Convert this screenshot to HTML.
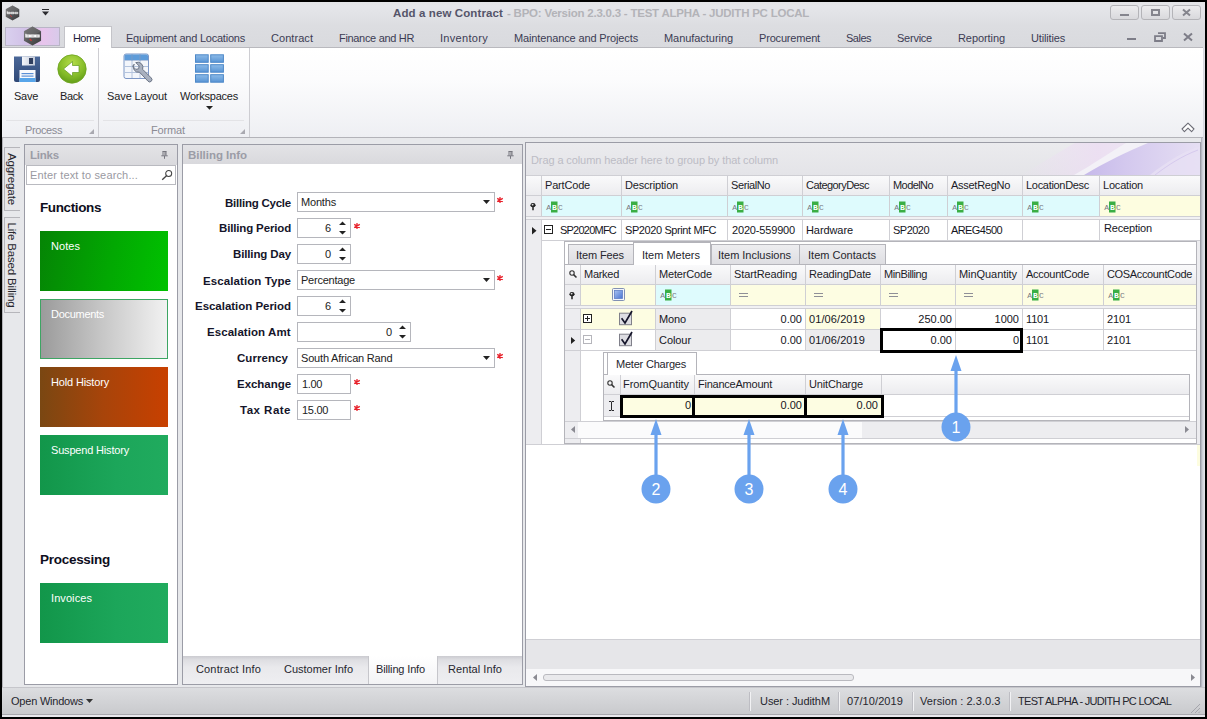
<!DOCTYPE html>
<html>
<head>
<meta charset="utf-8">
<title>Add a new Contract</title>
<style>
html,body{margin:0;padding:0;}
body{width:1207px;height:719px;overflow:hidden;background:#000;font-family:"Liberation Sans","DejaVu Sans",sans-serif;font-size:11px;color:#222;position:relative;}
.abs{position:absolute;}
.t{position:absolute;white-space:nowrap;}
svg{position:absolute;overflow:visible;}
</style>
</head>
<body>
<div class="abs" style="left:2px;top:2px;width:1203px;height:715px;background:#e7e8eb;"></div>
<div class="abs" style="left:1201px;top:26px;width:4px;height:691px;background:linear-gradient(90deg,#a9acb7,#cfd1d9 40%,#e6e7ec);"></div>
<div class="abs" style="left:2px;top:48px;width:1px;height:669px;background:#b4b4b9;"></div>
<div class="abs" style="left:2px;top:2px;width:1203px;height:24px;background:linear-gradient(#e3e4e7,#e5e6ea 18%,#dcdde1);"></div>
<div class="t" style="left:393px;top:5.5px;font-size:11.5px;line-height:15px;color:#55556a;letter-spacing:0.112px;font-weight:bold;">Add a new Contract</div>
<div class="t" style="left:507px;top:5.5px;font-size:11.5px;line-height:15px;color:#b3b3b8;letter-spacing:-0.227px;font-weight:bold;">- BPO: Version 2.3.0.3 - TEST ALPHA - JUDITH PC LOCAL</div>
<div class="abs" style="left:1110px;top:5px;width:29px;height:15px;background:linear-gradient(#ececee,#d9d9dc);border:1px solid #b4b4b8;box-sizing:border-box;border-radius:3px;"></div>
<div class="abs" style="left:1141px;top:5px;width:29px;height:15px;background:linear-gradient(#ececee,#d9d9dc);border:1px solid #b4b4b8;box-sizing:border-box;border-radius:3px;"></div>
<div class="abs" style="left:1172px;top:5px;width:29px;height:15px;background:linear-gradient(#ececee,#d9d9dc);border:1px solid #b4b4b8;box-sizing:border-box;border-radius:3px;"></div>
<div class="abs" style="left:1120px;top:14px;width:9px;height:2px;background:#85858d;"></div>
<div class="abs" style="left:1151px;top:9px;width:9px;height:7px;border:2px solid #85858d;box-sizing:border-box;"></div>
<svg style="left:1182px;top:9px" width="9" height="7" viewBox="0 0 9 7"><path d="M1 0.5L8 6.5M8 0.5L1 6.5" stroke="#85858d" stroke-width="2"/></svg>
<div class="abs" style="left:2px;top:26px;width:1203px;height:22px;background:linear-gradient(#dcdde1,#d9dade);"></div>
<div class="abs" style="left:5px;top:27px;width:55px;height:19px;background:linear-gradient(90deg,#d9d0ee,#d2c2e8 35%,#e8c4ec 70%,#d8caea);border:1px solid #b9b5c6;box-sizing:border-box;"></div>
<div class="abs" style="left:64px;top:26px;width:48px;height:22px;background:#fff;border:1px solid #c4c4c9;box-sizing:border-box;border-bottom:none;"></div>
<div class="t" style="left:73px;top:30.5px;font-size:11px;line-height:15px;color:#1d1d3a;letter-spacing:-0.586px;">Home</div>
<div class="t" style="left:126px;top:30.5px;font-size:11px;line-height:15px;color:#3c3c54;letter-spacing:-0.224px;">Equipment and Locations</div>
<div class="t" style="left:271px;top:30.5px;font-size:11px;line-height:15px;color:#3c3c54;letter-spacing:0.053px;">Contract</div>
<div class="t" style="left:339px;top:30.5px;font-size:11px;line-height:15px;color:#3c3c54;letter-spacing:-0.320px;">Finance and HR</div>
<div class="t" style="left:440px;top:30.5px;font-size:11px;line-height:15px;color:#3c3c54;letter-spacing:0.306px;">Inventory</div>
<div class="t" style="left:514px;top:30.5px;font-size:11px;line-height:15px;color:#3c3c54;letter-spacing:-0.133px;">Maintenance and Projects</div>
<div class="t" style="left:664px;top:30.5px;font-size:11px;line-height:15px;color:#3c3c54;letter-spacing:-0.054px;">Manufacturing</div>
<div class="t" style="left:759px;top:30.5px;font-size:11px;line-height:15px;color:#3c3c54;letter-spacing:-0.179px;">Procurement</div>
<div class="t" style="left:846px;top:30.5px;font-size:11px;line-height:15px;color:#3c3c54;letter-spacing:-0.503px;">Sales</div>
<div class="t" style="left:897px;top:30.5px;font-size:11px;line-height:15px;color:#3c3c54;letter-spacing:-0.240px;">Service</div>
<div class="t" style="left:958px;top:30.5px;font-size:11px;line-height:15px;color:#3c3c54;letter-spacing:-0.077px;">Reporting</div>
<div class="t" style="left:1031px;top:30.5px;font-size:11px;line-height:15px;color:#3c3c54;letter-spacing:-0.161px;">Utilities</div>
<div class="abs" style="left:1127px;top:38px;width:9px;height:2px;background:#7d7d88;"></div>
<svg style="left:1154px;top:32px" width="12" height="10" viewBox="0 0 12 10"><path d="M4 1.2H11V6H9M1 4.2H8V9H1Z" fill="none" stroke="#7d7d88" stroke-width="1.8"/></svg>
<svg style="left:1183px;top:33px" width="10" height="8" viewBox="0 0 10 8"><path d="M1 0.5L9 7.5M9 0.5L1 7.5" stroke="#7d7d88" stroke-width="2"/></svg>
<div class="abs" style="left:2px;top:47px;width:1201px;height:91px;background:linear-gradient(#ffffff 0%,#fcfcfd 35%,#eeeff3 100%);border-bottom:1px solid #b3b3b9;border-top:1px solid #b9b9be;box-sizing:border-box;"></div>
<div class="abs" style="left:65px;top:46px;width:46px;height:3px;background:#fff;"></div>
<div class="abs" style="left:64px;top:27px;width:1px;height:21px;background:#c4c4c9;"></div>
<div class="abs" style="left:111px;top:27px;width:1px;height:21px;background:#c4c4c9;"></div>
<div class="abs" style="left:98px;top:48px;width:1px;height:89px;background:#cdcdd2;"></div>
<div class="abs" style="left:249px;top:48px;width:1px;height:89px;background:#cdcdd2;"></div>
<div class="abs" style="left:6px;top:120px;width:88px;height:1px;background:#e3e3e6;"></div>
<div class="abs" style="left:103px;top:120px;width:141px;height:1px;background:#e3e3e6;"></div>
<div class="t" style="left:14px;top:88.5px;font-size:11px;line-height:15px;color:#1c1c24;letter-spacing:-0.268px;">Save</div>
<div class="t" style="left:60px;top:88.5px;font-size:11px;line-height:15px;color:#1c1c24;letter-spacing:-0.364px;">Back</div>
<div class="t" style="left:107px;top:88.5px;font-size:11px;line-height:15px;color:#1c1c24;letter-spacing:-0.105px;">Save Layout</div>
<div class="t" style="left:180px;top:88.5px;font-size:11px;line-height:15px;color:#1c1c24;letter-spacing:-0.232px;">Workspaces</div>
<svg style="left:206px;top:106px" width="7" height="4"><path d="M0 0H7L3.5 3.7Z" fill="#222"/></svg>
<div class="t" style="left:25px;top:122.5px;font-size:11px;line-height:15px;color:#8b8b94;letter-spacing:-0.391px;">Process</div>
<div class="t" style="left:151px;top:122.5px;font-size:11px;line-height:15px;color:#8b8b94;letter-spacing:-0.139px;">Format</div>
<svg style="left:89px;top:129px" width="5" height="5"><path d="M5 0V5H0Z" fill="#a9a9b0"/></svg>
<svg style="left:240px;top:129px" width="5" height="5"><path d="M5 0V5H0Z" fill="#a9a9b0"/></svg>
<svg style="left:1181px;top:122px" width="14" height="11" viewBox="0 0 14 11"><path d="M7 1.2L13 7L10.6 9.6L7 6.2L3.4 9.6L1 7Z" fill="#fff" stroke="#6c6c76" stroke-width="1.1" stroke-linejoin="round"/></svg>
<div class="abs" style="left:4px;top:147px;width:16px;height:64px;background:#e6e6e9;border:1px solid #b6b6bb;box-sizing:border-box;border-right:none;"></div>
<div class="abs" style="left:4px;top:217px;width:16px;height:96px;background:#e6e6e9;border:1px solid #b6b6bb;box-sizing:border-box;border-right:none;"></div>
<div class="t" style="left:12px;top:179px;font-size:11.5px;line-height:14px;color:#26262e;letter-spacing:-0.119px;transform:translate(-50%,-50%) rotate(90deg);">Aggregate</div>
<div class="t" style="left:12px;top:264.5px;font-size:11.5px;line-height:14px;color:#26262e;letter-spacing:-0.179px;transform:translate(-50%,-50%) rotate(90deg);">Life Based Billing</div>
<div class="abs" style="left:24px;top:144px;width:154px;height:541px;background:#fff;border:1px solid #9b9ca6;box-sizing:border-box;"></div>
<div class="abs" style="left:25px;top:145px;width:152px;height:20px;background:linear-gradient(#e3e3e6,#d9d9dd);"></div>
<div class="t" style="left:30px;top:147.5px;font-size:11.5px;line-height:15px;color:#9b9ca6;letter-spacing:-0.207px;font-weight:bold;">Links</div>
<div class="abs" style="left:26px;top:165px;width:150px;height:20px;background:#fff;border:1px solid #b9bac0;box-sizing:border-box;"></div>
<div class="t" style="left:30px;top:167.5px;font-size:11px;line-height:15px;color:#9a9aa2;letter-spacing:0.150px;">Enter text to search...</div>
<svg style="left:161px;top:169px" width="12" height="12" viewBox="0 0 12 12"><circle cx="7.7" cy="4.4" r="3" fill="none" stroke="#444" stroke-width="1.05"/><path d="M5.5 6.7L1.2 10.8" stroke="#444" stroke-width="1.3"/></svg>
<div class="t" style="left:40px;top:198.8px;font-size:13.5px;line-height:17.5px;color:#0e0e20;letter-spacing:-0.388px;font-weight:bold;">Functions</div>
<div class="t" style="left:40px;top:550.8px;font-size:13.5px;line-height:17.5px;color:#0e0e20;letter-spacing:-0.278px;font-weight:bold;">Processing</div>
<div class="abs" style="left:40px;top:231px;width:128px;height:60px;background:linear-gradient(100deg,#058405,#02a802 55%,#00c200);"></div>
<div class="t" style="left:51px;top:238.5px;font-size:11px;line-height:15px;color:#fff;letter-spacing:0.053px;">Notes</div>
<div class="abs" style="left:40px;top:299px;width:128px;height:60px;background:linear-gradient(90deg,#9b9b9b,#c8c8c8 50%,#f2f2f2);border:1px solid #3da563;box-sizing:border-box;"></div>
<div class="t" style="left:51px;top:306.5px;font-size:11px;line-height:15px;color:#fff;letter-spacing:-0.293px;">Documents</div>
<div class="abs" style="left:40px;top:367px;width:128px;height:60px;background:linear-gradient(90deg,#7a4712,#a8440a 50%,#c84000);"></div>
<div class="t" style="left:51px;top:374.5px;font-size:11px;line-height:15px;color:#fff;letter-spacing:-0.159px;">Hold History</div>
<div class="abs" style="left:40px;top:435px;width:128px;height:60px;background:linear-gradient(90deg,#12964a,#1ca65a 60%,#20ab5e);"></div>
<div class="t" style="left:51px;top:442.5px;font-size:11px;line-height:15px;color:#fff;letter-spacing:-0.180px;">Suspend History</div>
<div class="abs" style="left:40px;top:583px;width:128px;height:60px;background:linear-gradient(90deg,#12964a,#1ca65a 60%,#20ab5e);"></div>
<div class="t" style="left:51px;top:590.5px;font-size:11px;line-height:15px;color:#fff;letter-spacing:0.081px;">Invoices</div>
<div class="abs" style="left:182px;top:144px;width:341px;height:541px;background:#fff;border:1px solid #9b9ca6;box-sizing:border-box;"></div>
<div class="abs" style="left:183px;top:145px;width:339px;height:19px;background:linear-gradient(#e3e3e6,#d9d9dd);"></div>
<div class="t" style="left:188px;top:147.5px;font-size:11.5px;line-height:15px;color:#9b9ca6;letter-spacing:-0.034px;font-weight:bold;">Billing Info</div>
<div class="abs" style="left:525px;top:142px;width:676px;height:545px;background:#fff;border:1px solid #9b9ca6;box-sizing:border-box;"></div>
<div class="abs" style="left:2px;top:687px;width:1203px;height:1px;background:#c6c6cb;"></div>
<div class="abs" style="left:2px;top:688px;width:1203px;height:26px;background:linear-gradient(#dcdde0,#c9cacd);"></div>
<div class="abs" style="left:2px;top:714px;width:1203px;height:1px;background:#a9a9ae;"></div>
<div class="abs" style="left:2px;top:715px;width:1203px;height:2px;background:#e8e8ec;"></div>
<div class="t" style="left:225px;top:195.5px;font-size:11.5px;line-height:15px;color:#15152a;letter-spacing:-0.232px;font-weight:bold;">Billing Cycle</div>
<div class="t" style="left:219px;top:220.5px;font-size:11.5px;line-height:15px;color:#15152a;letter-spacing:-0.151px;font-weight:bold;">Billing Period</div>
<div class="t" style="left:233px;top:246.5px;font-size:11.5px;line-height:15px;color:#15152a;letter-spacing:-0.130px;font-weight:bold;">Billing Day</div>
<div class="t" style="left:203px;top:273.5px;font-size:11.5px;line-height:15px;color:#15152a;letter-spacing:0.086px;font-weight:bold;">Escalation Type</div>
<div class="t" style="left:195px;top:298.5px;font-size:11.5px;line-height:15px;color:#15152a;letter-spacing:-0.030px;font-weight:bold;">Escalation Period</div>
<div class="t" style="left:207px;top:324.5px;font-size:11.5px;line-height:15px;color:#15152a;letter-spacing:0.066px;font-weight:bold;">Escalation Amt</div>
<div class="t" style="left:237px;top:350.5px;font-size:11.5px;line-height:15px;color:#15152a;letter-spacing:0.063px;font-weight:bold;">Currency</div>
<div class="t" style="left:237px;top:376.5px;font-size:11.5px;line-height:15px;color:#15152a;letter-spacing:-0.041px;font-weight:bold;">Exchange</div>
<div class="t" style="left:240px;top:402.5px;font-size:11.5px;line-height:15px;color:#15152a;letter-spacing:0.490px;font-weight:bold;">Tax Rate</div>
<div class="abs" style="left:297px;top:192px;width:198px;height:20px;background:#fff;border:1px solid #b5b6bc;box-sizing:border-box;"></div>
<div class="t" style="left:301px;top:194.5px;font-size:11px;line-height:15px;color:#222;letter-spacing:-0.179px;">Months</div>
<svg style="left:483px;top:200px" width="7" height="4"><path d="M0 0H7L3.5 4Z" fill="#222"/></svg>
<svg style="left:497px;top:197px" width="6" height="6" viewBox="0 0 6 6"><path d="M3 0V6M0.2 1.4L5.8 4.6M5.8 1.4L0.2 4.6" stroke="#e8202a" stroke-width="1.25"/></svg>
<div class="abs" style="left:297px;top:218px;width:54px;height:20px;background:#fff;border:1px solid #b5b6bc;box-sizing:border-box;"></div>
<div class="t" style="left:324.88232421875px;top:220.5px;font-size:11px;line-height:15px;color:#222;letter-spacing:0.000px;">6</div>
<svg style="left:339px;top:221px" width="7" height="14"><path d="M0 4H7L3.5 0.4Z M0 10H7L3.5 13.6Z" fill="#222"/></svg>
<svg style="left:354px;top:223px" width="6" height="6" viewBox="0 0 6 6"><path d="M3 0V6M0.2 1.4L5.8 4.6M5.8 1.4L0.2 4.6" stroke="#e8202a" stroke-width="1.25"/></svg>
<div class="abs" style="left:297px;top:244px;width:54px;height:20px;background:#fff;border:1px solid #b5b6bc;box-sizing:border-box;"></div>
<div class="t" style="left:324.88232421875px;top:246.5px;font-size:11px;line-height:15px;color:#222;letter-spacing:0.000px;">0</div>
<svg style="left:339px;top:247px" width="7" height="14"><path d="M0 4H7L3.5 0.4Z M0 10H7L3.5 13.6Z" fill="#222"/></svg>
<div class="abs" style="left:297px;top:270px;width:198px;height:20px;background:#fff;border:1px solid #b5b6bc;box-sizing:border-box;"></div>
<div class="t" style="left:301px;top:272.5px;font-size:11px;line-height:15px;color:#222;letter-spacing:-0.226px;">Percentage</div>
<svg style="left:483px;top:278px" width="7" height="4"><path d="M0 0H7L3.5 4Z" fill="#222"/></svg>
<svg style="left:497px;top:275px" width="6" height="6" viewBox="0 0 6 6"><path d="M3 0V6M0.2 1.4L5.8 4.6M5.8 1.4L0.2 4.6" stroke="#e8202a" stroke-width="1.25"/></svg>
<div class="abs" style="left:297px;top:296px;width:54px;height:20px;background:#fff;border:1px solid #b5b6bc;box-sizing:border-box;"></div>
<div class="t" style="left:324.88232421875px;top:298.5px;font-size:11px;line-height:15px;color:#222;letter-spacing:0.000px;">6</div>
<svg style="left:339px;top:299px" width="7" height="14"><path d="M0 4H7L3.5 0.4Z M0 10H7L3.5 13.6Z" fill="#222"/></svg>
<div class="abs" style="left:297px;top:322px;width:114px;height:20px;background:#fff;border:1px solid #b5b6bc;box-sizing:border-box;"></div>
<div class="t" style="left:385.88232421875px;top:324.5px;font-size:11px;line-height:15px;color:#222;letter-spacing:0.000px;">0</div>
<svg style="left:399px;top:325px" width="7" height="14"><path d="M0 4H7L3.5 0.4Z M0 10H7L3.5 13.6Z" fill="#222"/></svg>
<div class="abs" style="left:297px;top:348px;width:198px;height:20px;background:#fff;border:1px solid #b5b6bc;box-sizing:border-box;"></div>
<div class="t" style="left:301px;top:350.5px;font-size:11px;line-height:15px;color:#222;letter-spacing:-0.188px;">South African Rand</div>
<svg style="left:483px;top:356px" width="7" height="4"><path d="M0 0H7L3.5 4Z" fill="#222"/></svg>
<svg style="left:497px;top:353px" width="6" height="6" viewBox="0 0 6 6"><path d="M3 0V6M0.2 1.4L5.8 4.6M5.8 1.4L0.2 4.6" stroke="#e8202a" stroke-width="1.25"/></svg>
<div class="abs" style="left:297px;top:374px;width:54px;height:20px;background:#fff;border:1px solid #b5b6bc;box-sizing:border-box;"></div>
<div class="t" style="left:302px;top:376.5px;font-size:11px;line-height:15px;color:#222;letter-spacing:-0.352px;">1.00</div>
<svg style="left:354px;top:379px" width="6" height="6" viewBox="0 0 6 6"><path d="M3 0V6M0.2 1.4L5.8 4.6M5.8 1.4L0.2 4.6" stroke="#e8202a" stroke-width="1.25"/></svg>
<div class="abs" style="left:297px;top:400px;width:54px;height:20px;background:#fff;border:1px solid #b5b6bc;box-sizing:border-box;"></div>
<div class="t" style="left:302px;top:402.5px;font-size:11px;line-height:15px;color:#222;letter-spacing:-0.305px;">15.00</div>
<svg style="left:354px;top:405px" width="6" height="6" viewBox="0 0 6 6"><path d="M3 0V6M0.2 1.4L5.8 4.6M5.8 1.4L0.2 4.6" stroke="#e8202a" stroke-width="1.25"/></svg>
<svg style="left:161px;top:151px" width="7" height="8" viewBox="0 0 7 8"><path d="M1.5 0.5H5.5M2 0.5V4.5M5 0.5V4.5M4 0.5V4.5M0.3 4.8H6.7M3.5 5V7.8" stroke="#77777f" stroke-width="1" fill="none"/></svg>
<svg style="left:507px;top:151px" width="7" height="8" viewBox="0 0 7 8"><path d="M1.5 0.5H5.5M2 0.5V4.5M5 0.5V4.5M4 0.5V4.5M0.3 4.8H6.7M3.5 5V7.8" stroke="#77777f" stroke-width="1" fill="none"/></svg>
<div class="abs" style="left:183px;top:656px;width:339px;height:28px;background:linear-gradient(#cbcbd0,#dedee2 14%,#e9e9ec 40%,#eeeef1);"></div>
<div class="abs" style="left:368px;top:656px;width:70px;height:28px;background:linear-gradient(#ffffff,#f3f3f5);border-left:1px solid #c6c6cb;border-right:1px solid #c6c6cb;box-sizing:border-box;"></div>
<div class="t" style="left:196px;top:661.5px;font-size:11px;line-height:15px;color:#26262e;letter-spacing:0.156px;">Contract Info</div>
<div class="t" style="left:284px;top:661.5px;font-size:11px;line-height:15px;color:#26262e;letter-spacing:-0.006px;">Customer Info</div>
<div class="t" style="left:376px;top:661.5px;font-size:11px;line-height:15px;color:#26262e;letter-spacing:-0.146px;">Billing Info</div>
<div class="t" style="left:448px;top:661.5px;font-size:11px;line-height:15px;color:#26262e;letter-spacing:0.073px;">Rental Info</div>
<div class="t" style="left:11px;top:693.5px;font-size:11px;line-height:15px;color:#26262e;letter-spacing:-0.216px;">Open Windows</div>
<svg style="left:86px;top:699px" width="7" height="4"><path d="M0 0H7L3.5 4Z" fill="#333"/></svg>
<div class="abs" style="left:749px;top:692px;width:1px;height:19px;background:#bdbdc3;"></div>
<div class="abs" style="left:750px;top:692px;width:1px;height:19px;background:#f2f2f4;"></div>
<div class="abs" style="left:838px;top:692px;width:1px;height:19px;background:#bdbdc3;"></div>
<div class="abs" style="left:839px;top:692px;width:1px;height:19px;background:#f2f2f4;"></div>
<div class="abs" style="left:912px;top:692px;width:1px;height:19px;background:#bdbdc3;"></div>
<div class="abs" style="left:913px;top:692px;width:1px;height:19px;background:#f2f2f4;"></div>
<div class="abs" style="left:1009px;top:692px;width:1px;height:19px;background:#bdbdc3;"></div>
<div class="abs" style="left:1010px;top:692px;width:1px;height:19px;background:#f2f2f4;"></div>
<div class="t" style="left:760px;top:693.5px;font-size:11px;line-height:15px;color:#26262e;letter-spacing:-0.065px;">User : JudithM</div>
<div class="t" style="left:847px;top:693.5px;font-size:11px;line-height:15px;color:#26262e;letter-spacing:0.095px;">07/10/2019</div>
<div class="t" style="left:920px;top:693.5px;font-size:11px;line-height:15px;color:#26262e;letter-spacing:0.059px;">Version : 2.3.0.3</div>
<div class="t" style="left:1018px;top:693.5px;font-size:11px;line-height:15px;color:#26262e;letter-spacing:-0.682px;">TEST ALPHA - JUDITH PC LOCAL</div>
<svg style="left:1190px;top:703px" width="11" height="11" viewBox="0 0 11 11"><path d="M10 1L1 10M10 5L5 10M10 8.5L8.5 10" stroke="#a5a5ac" stroke-width="1"/></svg>
<div class="abs" style="left:526px;top:143px;width:674px;height:32px;background:linear-gradient(#ebebee,#e4e4e8);"></div>
<svg style="left:1000px;top:143px" width="200" height="32" viewBox="0 0 200 32">
<defs>
<linearGradient id="sw1" x1="0" y1="0" x2="1" y2="0"><stop offset="0" stop-color="#ecdff2" stop-opacity="0"/><stop offset="0.6" stop-color="#ecdff2" stop-opacity="0.95"/><stop offset="1" stop-color="#eee6f4" stop-opacity="0.9"/></linearGradient>
<linearGradient id="sw2" x1="0" y1="0" x2="1" y2="0"><stop offset="0" stop-color="#c6b9ea"/><stop offset="0.35" stop-color="#d3c8ee"/><stop offset="1" stop-color="#e6dff3"/></linearGradient>
</defs>
<path d="M20 32C40 22 60 8 75 0H150L100 32Z" fill="url(#sw1)"/>
<path d="M74 32C92 22 112 8 126 0H152C132 9 110 23 92 32Z" fill="#f3f1f7"/>
<path d="M84 32C104 20 128 8 148 0H200V32Z" fill="url(#sw2)"/>
<path d="M150 32C165 20 180 10 200 3V32Z" fill="#e7e0f4" opacity="0.8"/>
<path d="M155 32C168 22 182 13 198 7" fill="none" stroke="#d6caee" stroke-width="1"/>
</svg>
<div class="t" style="left:531px;top:152.5px;font-size:11px;line-height:15px;color:#bcbcc5;letter-spacing:-0.101px;">Drag a column header here to group by that column</div>
<div class="abs" style="left:526px;top:175px;width:674px;height:21px;background:linear-gradient(#fafafb,#ececef);border-top:1px solid #cfcfd4;border-bottom:1px solid #cfcfd4;box-sizing:border-box;"></div>
<div class="t" style="left:545px;top:177.5px;font-size:11px;line-height:15px;color:#1c1c28;letter-spacing:-0.184px;">PartCode</div>
<div class="t" style="left:625px;top:177.5px;font-size:11px;line-height:15px;color:#1c1c28;letter-spacing:-0.184px;">Description</div>
<div class="t" style="left:731px;top:177.5px;font-size:11px;line-height:15px;color:#1c1c28;letter-spacing:-0.398px;">SerialNo</div>
<div class="t" style="left:806px;top:177.5px;font-size:11px;line-height:15px;color:#1c1c28;letter-spacing:-0.558px;">CategoryDesc</div>
<div class="t" style="left:893px;top:177.5px;font-size:11px;line-height:15px;color:#1c1c28;letter-spacing:-0.574px;">ModelNo</div>
<div class="t" style="left:951px;top:177.5px;font-size:11px;line-height:15px;color:#1c1c28;letter-spacing:-0.275px;">AssetRegNo</div>
<div class="t" style="left:1026px;top:177.5px;font-size:11px;line-height:15px;color:#1c1c28;letter-spacing:-0.304px;">LocationDesc</div>
<div class="t" style="left:1103px;top:177.5px;font-size:11px;line-height:15px;color:#1c1c28;letter-spacing:-0.199px;">Location</div>
<div class="abs" style="left:526px;top:196px;width:15px;height:21px;background:#ededf0;"></div>
<div class="abs" style="left:541px;top:196px;width:558px;height:21px;background:#defbfd;"></div>
<div class="abs" style="left:1099px;top:196px;width:101px;height:21px;background:#fdfde0;"></div>
<div class="abs" style="left:526px;top:216px;width:674px;height:1px;background:#cfcfd4;"></div>
<svg style="left:546px;top:200.5px" width="17" height="12" viewBox="0 0 17 12"><rect x="5" y="0.5" width="6.5" height="11" fill="#3aae44"/><text x="0.2" y="8.8" font-size="8" font-family="Liberation Mono,monospace" fill="#77777f">A</text><text x="5.9" y="8.8" font-size="8" font-family="Liberation Mono,monospace" font-weight="bold" fill="#fff">B</text><text x="12" y="8.8" font-size="8" font-family="Liberation Mono,monospace" fill="#77777f">C</text></svg>
<svg style="left:626px;top:200.5px" width="17" height="12" viewBox="0 0 17 12"><rect x="5" y="0.5" width="6.5" height="11" fill="#3aae44"/><text x="0.2" y="8.8" font-size="8" font-family="Liberation Mono,monospace" fill="#77777f">A</text><text x="5.9" y="8.8" font-size="8" font-family="Liberation Mono,monospace" font-weight="bold" fill="#fff">B</text><text x="12" y="8.8" font-size="8" font-family="Liberation Mono,monospace" fill="#77777f">C</text></svg>
<svg style="left:732px;top:200.5px" width="17" height="12" viewBox="0 0 17 12"><rect x="5" y="0.5" width="6.5" height="11" fill="#3aae44"/><text x="0.2" y="8.8" font-size="8" font-family="Liberation Mono,monospace" fill="#77777f">A</text><text x="5.9" y="8.8" font-size="8" font-family="Liberation Mono,monospace" font-weight="bold" fill="#fff">B</text><text x="12" y="8.8" font-size="8" font-family="Liberation Mono,monospace" fill="#77777f">C</text></svg>
<svg style="left:807px;top:200.5px" width="17" height="12" viewBox="0 0 17 12"><rect x="5" y="0.5" width="6.5" height="11" fill="#3aae44"/><text x="0.2" y="8.8" font-size="8" font-family="Liberation Mono,monospace" fill="#77777f">A</text><text x="5.9" y="8.8" font-size="8" font-family="Liberation Mono,monospace" font-weight="bold" fill="#fff">B</text><text x="12" y="8.8" font-size="8" font-family="Liberation Mono,monospace" fill="#77777f">C</text></svg>
<svg style="left:894px;top:200.5px" width="17" height="12" viewBox="0 0 17 12"><rect x="5" y="0.5" width="6.5" height="11" fill="#3aae44"/><text x="0.2" y="8.8" font-size="8" font-family="Liberation Mono,monospace" fill="#77777f">A</text><text x="5.9" y="8.8" font-size="8" font-family="Liberation Mono,monospace" font-weight="bold" fill="#fff">B</text><text x="12" y="8.8" font-size="8" font-family="Liberation Mono,monospace" fill="#77777f">C</text></svg>
<svg style="left:952px;top:200.5px" width="17" height="12" viewBox="0 0 17 12"><rect x="5" y="0.5" width="6.5" height="11" fill="#3aae44"/><text x="0.2" y="8.8" font-size="8" font-family="Liberation Mono,monospace" fill="#77777f">A</text><text x="5.9" y="8.8" font-size="8" font-family="Liberation Mono,monospace" font-weight="bold" fill="#fff">B</text><text x="12" y="8.8" font-size="8" font-family="Liberation Mono,monospace" fill="#77777f">C</text></svg>
<svg style="left:1027px;top:200.5px" width="17" height="12" viewBox="0 0 17 12"><rect x="5" y="0.5" width="6.5" height="11" fill="#3aae44"/><text x="0.2" y="8.8" font-size="8" font-family="Liberation Mono,monospace" fill="#77777f">A</text><text x="5.9" y="8.8" font-size="8" font-family="Liberation Mono,monospace" font-weight="bold" fill="#fff">B</text><text x="12" y="8.8" font-size="8" font-family="Liberation Mono,monospace" fill="#77777f">C</text></svg>
<svg style="left:1104px;top:200.5px" width="17" height="12" viewBox="0 0 17 12"><rect x="5" y="0.5" width="6.5" height="11" fill="#3aae44"/><text x="0.2" y="8.8" font-size="8" font-family="Liberation Mono,monospace" fill="#77777f">A</text><text x="5.9" y="8.8" font-size="8" font-family="Liberation Mono,monospace" font-weight="bold" fill="#fff">B</text><text x="12" y="8.8" font-size="8" font-family="Liberation Mono,monospace" fill="#77777f">C</text></svg>
<svg style="left:530px;top:203px" width="6" height="8" viewBox="0 0 6 8"><ellipse cx="3" cy="2.2" rx="2.6" ry="2.1" fill="#222"/><ellipse cx="2.6" cy="1.8" rx="1" ry="0.7" fill="#eee"/><path d="M3 4V7.2" stroke="#222" stroke-width="1.5"/></svg>
<div class="abs" style="left:541px;top:176px;width:1px;height:41px;background:#cfcfd4;"></div>
<div class="abs" style="left:621px;top:176px;width:1px;height:41px;background:#cfcfd4;"></div>
<div class="abs" style="left:727px;top:176px;width:1px;height:41px;background:#cfcfd4;"></div>
<div class="abs" style="left:802px;top:176px;width:1px;height:41px;background:#cfcfd4;"></div>
<div class="abs" style="left:889px;top:176px;width:1px;height:41px;background:#cfcfd4;"></div>
<div class="abs" style="left:947px;top:176px;width:1px;height:41px;background:#cfcfd4;"></div>
<div class="abs" style="left:1022px;top:176px;width:1px;height:41px;background:#cfcfd4;"></div>
<div class="abs" style="left:1099px;top:176px;width:1px;height:41px;background:#cfcfd4;"></div>
<div class="abs" style="left:526px;top:217px;width:674px;height:3px;background:#f1f1f3;"></div>
<div class="abs" style="left:526px;top:219px;width:674px;height:1px;background:#cfcfd4;"></div>
<div class="abs" style="left:526px;top:220px;width:15px;height:224px;background:#ededf0;"></div>
<div class="abs" style="left:541px;top:220px;width:1px;height:224px;background:#cfcfd4;"></div>
<div class="abs" style="left:541px;top:240px;width:659px;height:1px;background:#cfcfd4;"></div>
<div class="abs" style="left:621px;top:220px;width:1px;height:20px;background:#cfcfd4;"></div>
<div class="abs" style="left:727px;top:220px;width:1px;height:20px;background:#cfcfd4;"></div>
<div class="abs" style="left:802px;top:220px;width:1px;height:20px;background:#cfcfd4;"></div>
<div class="abs" style="left:889px;top:220px;width:1px;height:20px;background:#cfcfd4;"></div>
<div class="abs" style="left:947px;top:220px;width:1px;height:20px;background:#cfcfd4;"></div>
<div class="abs" style="left:1022px;top:220px;width:1px;height:20px;background:#cfcfd4;"></div>
<div class="abs" style="left:1099px;top:220px;width:1px;height:20px;background:#cfcfd4;"></div>
<svg style="left:532px;top:227px" width="5" height="8"><path d="M0 0L4.5 3.7L0 7.4Z" fill="#222"/></svg>
<svg style="left:544px;top:225px" width="9" height="9" viewBox="0 0 9 9"><rect x="0.5" y="0.5" width="8" height="8" fill="#fff" stroke="#222"/><path d="M2 4.5H7" stroke="#222" stroke-width="1"/></svg>
<div class="t" style="left:560px;top:222.5px;font-size:11px;line-height:15px;color:#16161e;letter-spacing:-0.775px;">SP2020MFC</div>
<div class="t" style="left:625px;top:222.5px;font-size:11px;line-height:15px;color:#16161e;letter-spacing:-0.401px;">SP2020 Sprint MFC</div>
<div class="t" style="left:732px;top:222.5px;font-size:11px;line-height:15px;color:#16161e;letter-spacing:-0.167px;">2020-559900</div>
<div class="t" style="left:806px;top:222.5px;font-size:11px;line-height:15px;color:#16161e;letter-spacing:-0.086px;">Hardware</div>
<div class="t" style="left:893px;top:222.5px;font-size:11px;line-height:15px;color:#16161e;letter-spacing:-0.524px;">SP2020</div>
<div class="t" style="left:951px;top:222.5px;font-size:11px;line-height:15px;color:#16161e;letter-spacing:-0.581px;">AREG4500</div>
<div class="t" style="left:1104px;top:220.5px;font-size:11px;line-height:15px;color:#16161e;letter-spacing:-0.170px;">Reception</div>
<div class="abs" style="left:564px;top:241px;width:633px;height:203px;background:#fff;border:1px solid #b4b4ba;box-sizing:border-box;"></div>
<div class="abs" style="left:568px;top:244px;width:66px;height:21px;background:linear-gradient(#ededf0,#dedee2);border:1px solid #b4b4ba;box-sizing:border-box;"></div>
<div class="abs" style="left:711px;top:244px;width:89px;height:21px;background:linear-gradient(#ededf0,#dedee2);border:1px solid #b4b4ba;box-sizing:border-box;"></div>
<div class="abs" style="left:799px;top:244px;width:87px;height:21px;background:linear-gradient(#ededf0,#dedee2);border:1px solid #b4b4ba;box-sizing:border-box;"></div>
<div class="abs" style="left:633px;top:242px;width:78px;height:24px;background:#fff;border:1px solid #b4b4ba;box-sizing:border-box;border-bottom:none;"></div>
<div class="abs" style="left:565px;top:264px;width:68px;height:1px;background:#b4b4ba;"></div>
<div class="abs" style="left:711px;top:264px;width:485px;height:1px;background:#b4b4ba;"></div>
<div class="t" style="left:576px;top:247.5px;font-size:11px;line-height:15px;color:#26262e;letter-spacing:-0.100px;">Item Fees</div>
<div class="t" style="left:642px;top:247.5px;font-size:11px;line-height:15px;color:#26262e;letter-spacing:-0.006px;">Item Meters</div>
<div class="t" style="left:718px;top:247.5px;font-size:11px;line-height:15px;color:#26262e;letter-spacing:-0.024px;">Item Inclusions</div>
<div class="t" style="left:808px;top:247.5px;font-size:11px;line-height:15px;color:#26262e;letter-spacing:0.011px;">Item Contacts</div>
<div class="abs" style="left:565px;top:265px;width:631px;height:20px;background:linear-gradient(#fafafb,#ececef);border-bottom:1px solid #cfcfd4;box-sizing:border-box;"></div>
<div class="t" style="left:584px;top:267.0px;font-size:11px;line-height:15px;color:#1c1c28;letter-spacing:-0.280px;">Marked</div>
<div class="t" style="left:659px;top:267.0px;font-size:11px;line-height:15px;color:#1c1c28;letter-spacing:-0.157px;">MeterCode</div>
<div class="t" style="left:734px;top:267.0px;font-size:11px;line-height:15px;color:#1c1c28;letter-spacing:-0.101px;">StartReading</div>
<div class="t" style="left:809px;top:267.0px;font-size:11px;line-height:15px;color:#1c1c28;letter-spacing:-0.201px;">ReadingDate</div>
<div class="t" style="left:884px;top:267.0px;font-size:11px;line-height:15px;color:#1c1c28;letter-spacing:-0.407px;">MinBilling</div>
<div class="t" style="left:959px;top:267.0px;font-size:11px;line-height:15px;color:#1c1c28;letter-spacing:-0.063px;">MinQuantity</div>
<div class="t" style="left:1026px;top:267.0px;font-size:11px;line-height:15px;color:#1c1c28;letter-spacing:-0.277px;">AccountCode</div>
<div class="t" style="left:1107px;top:267.0px;font-size:11px;line-height:15px;color:#1c1c28;letter-spacing:-0.349px;">COSAccountCode</div>
<svg style="left:569px;top:270px" width="8" height="8" viewBox="0 0 8 8"><circle cx="3" cy="3" r="2.2" fill="none" stroke="#333" stroke-width="1.1"/><path d="M4.6 4.6L7.5 7.5" stroke="#333" stroke-width="1.5"/></svg>
<div class="abs" style="left:565px;top:285px;width:15px;height:21px;background:#ededf0;"></div>
<div class="abs" style="left:580px;top:285px;width:616px;height:21px;background:#fdfde2;"></div>
<div class="abs" style="left:655px;top:285px;width:75px;height:21px;background:#defbfd;"></div>
<div class="abs" style="left:565px;top:305px;width:631px;height:1px;background:#cfcfd4;"></div>
<svg style="left:569px;top:292px" width="6" height="8" viewBox="0 0 6 8"><ellipse cx="3" cy="2.2" rx="2.6" ry="2.1" fill="#222"/><ellipse cx="2.6" cy="1.8" rx="1" ry="0.7" fill="#eee"/><path d="M3 4V7.2" stroke="#222" stroke-width="1.5"/></svg>
<svg style="left:612px;top:288px" width="13" height="13" viewBox="0 0 13 13"><defs><linearGradient id="bq" x1="0" y1="0" x2="1" y2="1"><stop offset="0" stop-color="#a9c2f0"/><stop offset="1" stop-color="#4a74d2"/></linearGradient></defs><rect x="0.5" y="0.5" width="12" height="12" rx="1" fill="#f3f5fb" stroke="#8190b4"/><rect x="2.5" y="2.5" width="8" height="8" fill="url(#bq)" stroke="#5f7fc6" stroke-width="0.8"/></svg>
<svg style="left:660px;top:289px" width="17" height="12" viewBox="0 0 17 12"><rect x="5" y="0.5" width="6.5" height="11" fill="#3aae44"/><text x="0.2" y="8.8" font-size="8" font-family="Liberation Mono,monospace" fill="#77777f">A</text><text x="5.9" y="8.8" font-size="8" font-family="Liberation Mono,monospace" font-weight="bold" fill="#fff">B</text><text x="12" y="8.8" font-size="8" font-family="Liberation Mono,monospace" fill="#77777f">C</text></svg>
<svg style="left:1027px;top:289px" width="17" height="12" viewBox="0 0 17 12"><rect x="5" y="0.5" width="6.5" height="11" fill="#3aae44"/><text x="0.2" y="8.8" font-size="8" font-family="Liberation Mono,monospace" fill="#77777f">A</text><text x="5.9" y="8.8" font-size="8" font-family="Liberation Mono,monospace" font-weight="bold" fill="#fff">B</text><text x="12" y="8.8" font-size="8" font-family="Liberation Mono,monospace" fill="#77777f">C</text></svg>
<svg style="left:1108px;top:289px" width="17" height="12" viewBox="0 0 17 12"><rect x="5" y="0.5" width="6.5" height="11" fill="#3aae44"/><text x="0.2" y="8.8" font-size="8" font-family="Liberation Mono,monospace" fill="#77777f">A</text><text x="5.9" y="8.8" font-size="8" font-family="Liberation Mono,monospace" font-weight="bold" fill="#fff">B</text><text x="12" y="8.8" font-size="8" font-family="Liberation Mono,monospace" fill="#77777f">C</text></svg>
<div class="abs" style="left:739px;top:293px;width:9px;height:1px;background:#8f8f97;"></div>
<div class="abs" style="left:739px;top:296px;width:9px;height:1px;background:#8f8f97;"></div>
<div class="abs" style="left:814px;top:293px;width:9px;height:1px;background:#8f8f97;"></div>
<div class="abs" style="left:814px;top:296px;width:9px;height:1px;background:#8f8f97;"></div>
<div class="abs" style="left:889px;top:293px;width:9px;height:1px;background:#8f8f97;"></div>
<div class="abs" style="left:889px;top:296px;width:9px;height:1px;background:#8f8f97;"></div>
<div class="abs" style="left:964px;top:293px;width:9px;height:1px;background:#8f8f97;"></div>
<div class="abs" style="left:964px;top:296px;width:9px;height:1px;background:#8f8f97;"></div>
<div class="abs" style="left:580px;top:265px;width:1px;height:41px;background:#cfcfd4;"></div>
<div class="abs" style="left:655px;top:265px;width:1px;height:41px;background:#cfcfd4;"></div>
<div class="abs" style="left:730px;top:265px;width:1px;height:41px;background:#cfcfd4;"></div>
<div class="abs" style="left:805px;top:265px;width:1px;height:41px;background:#cfcfd4;"></div>
<div class="abs" style="left:880px;top:265px;width:1px;height:41px;background:#cfcfd4;"></div>
<div class="abs" style="left:955px;top:265px;width:1px;height:41px;background:#cfcfd4;"></div>
<div class="abs" style="left:1022px;top:265px;width:1px;height:41px;background:#cfcfd4;"></div>
<div class="abs" style="left:1103px;top:265px;width:1px;height:41px;background:#cfcfd4;"></div>
<div class="abs" style="left:565px;top:306px;width:631px;height:3px;background:#f1f1f3;"></div>
<div class="abs" style="left:565px;top:308px;width:631px;height:1px;background:#cfcfd4;"></div>
<div class="abs" style="left:565px;top:309px;width:15px;height:134px;background:#ededf0;"></div>
<div class="abs" style="left:580px;top:309px;width:1px;height:134px;background:#cfcfd4;"></div>
<div class="abs" style="left:581px;top:309px;width:74px;height:20px;background:#fdfde2;"></div>
<div class="abs" style="left:656px;top:309px;width:74px;height:20px;background:#ececee;"></div>
<div class="abs" style="left:806px;top:309px;width:74px;height:20px;background:#fdfde2;"></div>
<div class="abs" style="left:581px;top:330px;width:74px;height:20px;background:#fff;"></div>
<div class="abs" style="left:656px;top:330px;width:74px;height:20px;background:#ececee;"></div>
<div class="abs" style="left:806px;top:330px;width:74px;height:20px;background:#ececee;"></div>
<div class="abs" style="left:565px;top:329px;width:631px;height:1px;background:#cfcfd4;"></div>
<div class="abs" style="left:565px;top:350px;width:631px;height:1px;background:#cfcfd4;"></div>
<div class="abs" style="left:655px;top:309px;width:1px;height:42px;background:#cfcfd4;"></div>
<div class="abs" style="left:730px;top:309px;width:1px;height:42px;background:#cfcfd4;"></div>
<div class="abs" style="left:805px;top:309px;width:1px;height:42px;background:#cfcfd4;"></div>
<div class="abs" style="left:880px;top:309px;width:1px;height:42px;background:#cfcfd4;"></div>
<div class="abs" style="left:955px;top:309px;width:1px;height:42px;background:#cfcfd4;"></div>
<div class="abs" style="left:1022px;top:309px;width:1px;height:42px;background:#cfcfd4;"></div>
<div class="abs" style="left:1103px;top:309px;width:1px;height:42px;background:#cfcfd4;"></div>
<svg style="left:583px;top:314px" width="9" height="9" viewBox="0 0 9 9"><rect x="0.5" y="0.5" width="8" height="8" fill="#fff" stroke="#222"/><path d="M2 4.5H7M4.5 2V7" stroke="#222" stroke-width="1"/></svg>
<svg style="left:583px;top:335px" width="9" height="9" viewBox="0 0 9 9"><rect x="0.5" y="0.5" width="8" height="8" fill="#fff" stroke="#b5b5bb"/><path d="M2 4.5H7" stroke="#b5b5bb" stroke-width="1"/></svg>
<svg style="left:571px;top:337px" width="5" height="8"><path d="M0 0L4.2 3.5L0 7Z" fill="#222"/></svg>
<svg style="left:619px;top:310px" width="15" height="16" viewBox="0 0 15 16"><rect x="0.5" y="3.2" width="12" height="11.5" fill="#dddde2" stroke="#80808a"/><path d="M2.6 8.3L6 13L13 1" fill="none" stroke="#15152a" stroke-width="1.7"/></svg>
<svg style="left:619px;top:331px" width="15" height="16" viewBox="0 0 15 16"><rect x="0.5" y="3.2" width="12" height="11.5" fill="#dddde2" stroke="#80808a"/><path d="M2.6 8.3L6 13L13 1" fill="none" stroke="#15152a" stroke-width="1.7"/></svg>
<div class="t" style="left:659px;top:312.0px;font-size:11px;line-height:15px;color:#16161e;letter-spacing:-0.129px;">Mono</div>
<div class="t" style="left:659px;top:333.0px;font-size:11px;line-height:15px;color:#16161e;letter-spacing:-0.067px;">Colour</div>
<div class="t" style="left:780.5908203125px;top:312.0px;font-size:11px;line-height:15px;color:#16161e;letter-spacing:0.000px;">0.00</div>
<div class="t" style="left:809px;top:312.0px;font-size:11px;line-height:15px;color:#16161e;letter-spacing:0.095px;">01/06/2019</div>
<div class="t" style="left:1026px;top:312.0px;font-size:11px;line-height:15px;color:#16161e;letter-spacing:-0.164px;">1101</div>
<div class="t" style="left:1107px;top:312.0px;font-size:11px;line-height:15px;color:#16161e;letter-spacing:-0.118px;">2101</div>
<div class="t" style="left:780.5908203125px;top:333.0px;font-size:11px;line-height:15px;color:#16161e;letter-spacing:0.000px;">0.00</div>
<div class="t" style="left:809px;top:333.0px;font-size:11px;line-height:15px;color:#16161e;letter-spacing:0.095px;">01/06/2019</div>
<div class="t" style="left:1026px;top:333.0px;font-size:11px;line-height:15px;color:#16161e;letter-spacing:-0.164px;">1101</div>
<div class="t" style="left:1107px;top:333.0px;font-size:11px;line-height:15px;color:#16161e;letter-spacing:-0.118px;">2101</div>
<div class="t" style="left:918.35546875px;top:312.0px;font-size:11px;line-height:15px;color:#16161e;letter-spacing:0.000px;">250.00</div>
<div class="t" style="left:994.529296875px;top:312.0px;font-size:11px;line-height:15px;color:#16161e;letter-spacing:0.000px;">1000</div>
<div class="t" style="left:930.5908203125px;top:333.0px;font-size:11px;line-height:15px;color:#16161e;letter-spacing:0.000px;">0.00</div>
<div class="t" style="left:1012.88232421875px;top:333.0px;font-size:11px;line-height:15px;color:#16161e;letter-spacing:0.000px;">0</div>
<div class="abs" style="left:880px;top:328px;width:143px;height:25px;border:3px solid #000;box-sizing:border-box;"></div>
<div class="abs" style="left:603px;top:352px;width:94px;height:23px;background:#fff;border:1px solid #b4b4ba;box-sizing:border-box;border-bottom:none;"></div>
<div class="abs" style="left:607px;top:352px;width:90px;height:23px;background:#fff;border:1px solid #b4b4ba;box-sizing:border-box;border-bottom:none;"></div>
<div class="t" style="left:616px;top:356.5px;font-size:11px;line-height:15px;color:#26262e;letter-spacing:-0.212px;">Meter Charges</div>
<div class="abs" style="left:603px;top:374px;width:587px;height:47px;background:#fff;border:1px solid #b4b4ba;box-sizing:border-box;"></div>
<div class="abs" style="left:604px;top:375px;width:585px;height:20px;background:linear-gradient(#fafafb,#ececef);border-bottom:1px solid #cfcfd4;box-sizing:border-box;"></div>
<div class="abs" style="left:608px;top:374px;width:88px;height:1px;background:#fff;"></div>
<div class="t" style="left:623px;top:376.5px;font-size:11px;line-height:15px;color:#1c1c28;letter-spacing:-0.052px;">FromQuantity</div>
<div class="t" style="left:698px;top:376.5px;font-size:11px;line-height:15px;color:#1c1c28;letter-spacing:-0.234px;">FinanceAmount</div>
<div class="t" style="left:809px;top:376.5px;font-size:11px;line-height:15px;color:#1c1c28;letter-spacing:-0.164px;">UnitCharge</div>
<div class="abs" style="left:620px;top:375px;width:1px;height:20px;background:#cfcfd4;"></div>
<div class="abs" style="left:694px;top:375px;width:1px;height:20px;background:#cfcfd4;"></div>
<div class="abs" style="left:805px;top:375px;width:1px;height:20px;background:#cfcfd4;"></div>
<div class="abs" style="left:881px;top:375px;width:1px;height:20px;background:#cfcfd4;"></div>
<svg style="left:607px;top:380px" width="8" height="8" viewBox="0 0 8 8"><circle cx="3" cy="3" r="2.2" fill="none" stroke="#333" stroke-width="1.1"/><path d="M4.6 4.6L7.5 7.5" stroke="#333" stroke-width="1.5"/></svg>
<div class="abs" style="left:604px;top:395px;width:16px;height:21px;background:#ededf0;"></div>
<div class="abs" style="left:620px;top:395px;width:261px;height:21px;background:#fdfde2;"></div>
<div class="abs" style="left:604px;top:416px;width:585px;height:1px;background:#cfcfd4;"></div>
<svg style="left:608px;top:401px" width="7" height="10" viewBox="0 0 7 10"><path d="M1 0.5H3L3.5 1L4 0.5H6M1 9.5H3L3.5 9L4 9.5H6M3.5 1V9" fill="none" stroke="#2a2a2e" stroke-width="1"/></svg>
<div class="t" style="left:684.88232421875px;top:398.0px;font-size:11px;line-height:15px;color:#16161e;letter-spacing:0.000px;">0</div>
<div class="t" style="left:780.5908203125px;top:398.0px;font-size:11px;line-height:15px;color:#16161e;letter-spacing:0.000px;">0.00</div>
<div class="t" style="left:856.5908203125px;top:398.0px;font-size:11px;line-height:15px;color:#16161e;letter-spacing:0.000px;">0.00</div>
<div class="abs" style="left:620px;top:395px;width:75px;height:23px;border:3px solid #000;box-sizing:border-box;"></div>
<div class="abs" style="left:692px;top:395px;width:115px;height:23px;border:3px solid #000;box-sizing:border-box;"></div>
<div class="abs" style="left:804px;top:395px;width:80px;height:23px;border:3px solid #000;box-sizing:border-box;"></div>
<div class="abs" style="left:565px;top:421px;width:631px;height:18px;background:#ededf0;border-top:1px solid #cfcfd4;border-bottom:1px solid #cfcfd4;box-sizing:border-box;"></div>
<div class="abs" style="left:578px;top:422px;width:284px;height:16px;background:#fbfbfc;"></div>
<svg style="left:571px;top:426px" width="4" height="7"><path d="M4 0V7L0 3.5Z" fill="#8a8a92"/></svg>
<svg style="left:1185px;top:426px" width="4" height="7"><path d="M0 0V7L4 3.5Z" fill="#8a8a92"/></svg>
<div class="abs" style="left:526px;top:444px;width:674px;height:1px;background:#cfcfd4;"></div>
<div class="abs" style="left:1197px;top:241px;width:3px;height:203px;background:#ededf0;"></div>
<div class="abs" style="left:1197px;top:445px;width:3px;height:21px;background:#fdfde0;"></div>
<div class="abs" style="left:526px;top:639px;width:674px;height:30px;background:#e6e6e9;border-top:1px solid #cfcfd4;box-sizing:border-box;"></div>
<div class="abs" style="left:526px;top:669px;width:674px;height:17px;background:#f7f7f9;"></div>
<div class="abs" style="left:543px;top:674px;width:311px;height:7px;background:#e9e9ec;border:1px solid #b9b9bf;box-sizing:border-box;border-radius:3px;"></div>
<svg style="left:533px;top:674px" width="4" height="7"><path d="M4 0V7L0 3.5Z" fill="#8a8a92"/></svg>
<svg style="left:1191px;top:674px" width="4" height="7"><path d="M0 0V7L4 3.5Z" fill="#8a8a92"/></svg>
<svg style="left:939.5px;top:355px" width="32" height="88" viewBox="0 0 32 88"><path d="M16 0L21.5 16H17.6V72H14.4V16H10.5Z" fill="#6aa2ee"/><circle cx="16" cy="72" r="14.5" fill="#6aa2ee"/><text x="16" y="77.5" font-size="16" font-family="Liberation Sans,sans-serif" fill="#fff" text-anchor="middle">1</text></svg>
<svg style="left:639.5px;top:419px" width="32" height="86" viewBox="0 0 32 86"><path d="M16 0L21.5 16H17.6V70H14.4V16H10.5Z" fill="#6aa2ee"/><circle cx="16" cy="70" r="14.5" fill="#6aa2ee"/><text x="16" y="75.5" font-size="16" font-family="Liberation Sans,sans-serif" fill="#fff" text-anchor="middle">2</text></svg>
<svg style="left:732.5px;top:419px" width="32" height="86" viewBox="0 0 32 86"><path d="M16 0L21.5 16H17.6V70H14.4V16H10.5Z" fill="#6aa2ee"/><circle cx="16" cy="70" r="14.5" fill="#6aa2ee"/><text x="16" y="75.5" font-size="16" font-family="Liberation Sans,sans-serif" fill="#fff" text-anchor="middle">3</text></svg>
<svg style="left:826.5px;top:419px" width="32" height="86" viewBox="0 0 32 86"><path d="M16 0L21.5 16H17.6V70H14.4V16H10.5Z" fill="#6aa2ee"/><circle cx="16" cy="70" r="14.5" fill="#6aa2ee"/><text x="16" y="75.5" font-size="16" font-family="Liberation Sans,sans-serif" fill="#fff" text-anchor="middle">4</text></svg>
<svg style="left:5px;top:5px" width="15" height="16" viewBox="0 0 20 21">
<defs><linearGradient id="hx5" x1="0" y1="0" x2="1" y2="1"><stop offset="0" stop-color="#8c8c8c"/><stop offset="0.5" stop-color="#58585a"/><stop offset="1" stop-color="#38383a"/></linearGradient></defs>
<path d="M10 0.5L19 5.5V15.5L10 20.5L1 15.5V5.5Z" fill="url(#hx5)"/>
<path d="M10 0.5L19 5.5L10 10.5L1 5.5Z" fill="#6b6b6d" opacity="0.6"/>
<path d="M3 8.2V11.4H7V9.6H3M8.2 9.6H12V11.4H8.2ZM13.2 9.6H17V11.4H13.2Z" fill="none" stroke="#fff" stroke-width="1.1"/>
<path d="M7 13.5L9 15.5" stroke="#e03030" stroke-width="1.2"/>
</svg>
<svg style="left:23px;top:26px" width="19" height="20" viewBox="0 0 20 21">
<defs><linearGradient id="hx23" x1="0" y1="0" x2="1" y2="1"><stop offset="0" stop-color="#8c8c8c"/><stop offset="0.5" stop-color="#58585a"/><stop offset="1" stop-color="#38383a"/></linearGradient></defs>
<path d="M10 0.5L19 5.5V15.5L10 20.5L1 15.5V5.5Z" fill="url(#hx23)"/>
<path d="M10 0.5L19 5.5L10 10.5L1 5.5Z" fill="#6b6b6d" opacity="0.6"/>
<path d="M3 8.2V11.4H7V9.6H3M8.2 9.6H12V11.4H8.2ZM13.2 9.6H17V11.4H13.2Z" fill="none" stroke="#fff" stroke-width="1.1"/>
<path d="M7 13.5L9 15.5" stroke="#e03030" stroke-width="1.2"/>
</svg>
<div class="abs" style="left:42px;top:9px;width:7px;height:1px;background:#2a2a2e;"></div>
<svg style="left:42px;top:11px" width="7" height="5"><path d="M0 0.5H7L3.5 4.5Z" fill="#2a2a2e"/></svg>
<svg style="left:13px;top:55px" width="28" height="28" viewBox="0 0 28 28">
<defs><linearGradient id="fl" x1="0" y1="0" x2="0" y2="1"><stop offset="0" stop-color="#4a6798"/><stop offset="1" stop-color="#2f4876"/></linearGradient>
<linearGradient id="fs" x1="0" y1="0" x2="1" y2="0"><stop offset="0" stop-color="#f4f6fa"/><stop offset="1" stop-color="#c3cad8"/></linearGradient></defs>
<path d="M1 1.5H27V25Q27 27 25 27H3Q1 27 1 25Z" fill="url(#fl)"/>
<rect x="9" y="1.5" width="13" height="9" fill="url(#fs)"/>
<rect x="16" y="3" width="4" height="6" fill="#2f3e5e"/>
<rect x="6.5" y="15" width="16" height="12" fill="#f8fafd"/>
<rect x="8.5" y="18" width="12" height="1.2" fill="#5a8fd6"/><rect x="8.5" y="20.5" width="12" height="1.2" fill="#5a8fd6"/>
<rect x="6.5" y="23" width="16" height="4" fill="#57a5ea"/>
</svg>
<svg style="left:57px;top:54px" width="30" height="30" viewBox="0 0 30 30">
<defs><radialGradient id="gb" cx="0.5" cy="0.3" r="0.75"><stop offset="0" stop-color="#b4dc4a"/><stop offset="0.6" stop-color="#84bb28"/><stop offset="1" stop-color="#5b9716"/></radialGradient></defs>
<circle cx="15" cy="15" r="14.2" fill="url(#gb)" stroke="#6ea321" stroke-width="0.8"/>
<path d="M6.5 15L15.5 7.5V11.5H22V18.5H15.5V22.5Z" fill="#fff" stroke="#5f9a1c" stroke-width="0.7"/>
</svg>
<svg style="left:123px;top:53px" width="30" height="30" viewBox="0 0 30 30">
<rect x="1" y="1" width="24.5" height="24.5" rx="2" fill="#f3f6fb" stroke="#7d97c6" stroke-width="1"/>
<path d="M1.5 3Q1.5 1.5 3 1.5H23.5Q25 1.5 25 3V7.5H1.5Z" fill="#5d9bd9"/>
<path d="M1.5 7.5H25M1.5 13.5H25M1.5 19.5H25M9 1.5V25M17 1.5V25" stroke="#b4c4de" stroke-width="1" fill="none"/>
<path d="M9 1.5V7.5M17 1.5V7.5" stroke="#4a86c6" stroke-width="1"/>
<path d="M11.2 11.2A5.2 5.2 0 0 0 16.5 19.2L25 28.2A2.2 2.2 0 0 0 28.3 25L19.6 16.3A5.2 5.2 0 0 0 12.8 9.6L16.2 13L15.6 15.8L12.8 16.4L9.6 13.2Z" fill="#a8b0bf" stroke="#6d7687" stroke-width="1" transform="translate(0,0)"/>
</svg>
<svg style="left:194px;top:53px" width="31" height="31" viewBox="0 0 31 31"><defs><linearGradient id="wsg" x1="0" y1="0" x2="0" y2="1"><stop offset="0" stop-color="#8dbbe8"/><stop offset="1" stop-color="#5894d4"/></linearGradient></defs><rect x="1.5" y="1.8" width="12.7" height="7.5" fill="url(#wsg)" stroke="#4d88c8" stroke-width="1"/><rect x="1.5" y="11.7" width="12.7" height="7.5" fill="url(#wsg)" stroke="#4d88c8" stroke-width="1"/><rect x="1.5" y="21.7" width="12.7" height="7.5" fill="url(#wsg)" stroke="#4d88c8" stroke-width="1"/><rect x="16.7" y="1.8" width="12.7" height="7.5" fill="url(#wsg)" stroke="#4d88c8" stroke-width="1"/><rect x="16.7" y="11.7" width="12.7" height="7.5" fill="url(#wsg)" stroke="#4d88c8" stroke-width="1"/><rect x="16.7" y="21.7" width="12.7" height="7.5" fill="url(#wsg)" stroke="#4d88c8" stroke-width="1"/></svg>
</body>
</html>
